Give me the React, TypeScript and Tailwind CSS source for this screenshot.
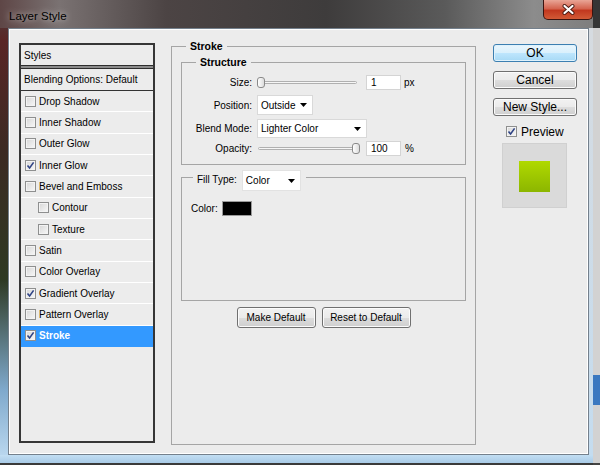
import type { ReactNode } from "react";

type StyleRow = { label: string; on?: boolean; sub?: boolean; active?: boolean };

const styleRows: StyleRow[] = [
  { label: "Drop Shadow" },
  { label: "Inner Shadow" },
  { label: "Outer Glow" },
  { label: "Inner Glow", on: true },
  { label: "Bevel and Emboss" },
  { label: "Contour", sub: true },
  { label: "Texture", sub: true },
  { label: "Satin" },
  { label: "Color Overlay" },
  { label: "Gradient Overlay", on: true },
  { label: "Pattern Overlay" },
  { label: "Stroke", on: true, active: true },
];

function Check({ on }: { on?: boolean }) {
  return (
    <span className="flex h-[11px] w-[11px] shrink-0 items-center justify-center border border-[#8e8f8f] bg-[image:linear-gradient(135deg,#d6d6d6,#f8f8f8)] shadow-[inset_0_0_0_1px_#f3f3f3]">
      {on && (
        <svg width="9" height="9" viewBox="0 0 9 9">
          <path d="M1.5 4.5 3.6 7 7.6 1.4" fill="none" stroke="#2f4385" strokeWidth="1.6" />
        </svg>
      )}
    </span>
  );
}

function Btn({ children, className, primary }: { children: ReactNode; className: string; primary?: boolean }) {
  return (
    <button
      className={`flex items-center justify-center rounded-[3px] border text-black ${
        primary
          ? "border-[#3c7fb1] bg-[image:linear-gradient(#eaf6fd,#d9f0fc_50%,#bee6fd_51%,#a7d9f5)] shadow-[inset_0_0_0_1px_#dff2fc]"
          : "border-[#707070] bg-[image:linear-gradient(#f2f2f2,#ebebeb_50%,#dddddd_51%,#cfcfcf)] shadow-[inset_0_0_0_1px_#fbfbfb]"
      } ${className}`}
    >
      {children}
    </button>
  );
}

function Slider({ end }: { end?: boolean }) {
  return (
    <div className="relative flex h-[15px] w-[100px] items-center">
      <div className="ml-[1px] h-[3px] flex-1 rounded-full border border-[#b0b0b0] bg-[#f6f6f6]" />
      <div
        className={`absolute top-[2px] h-[11px] w-[8px] rounded-[3px] border border-[#8a8a8a] bg-[image:linear-gradient(to_right,#ffffff,#dcdcdc)] ${
          end ? "right-[-3px]" : "left-0"
        }`}
      />
    </div>
  );
}

function Field({ value }: { value: string }) {
  return (
    <div className="ml-[9px] flex h-[15px] w-[35px] items-center border border-[#d4d4d4] bg-white pl-[4px] text-[10px] text-black">
      {value}
    </div>
  );
}

function Drop({ value, className }: { value: string; className: string }) {
  return (
    <div className={`flex items-center justify-between border border-[#d9d9d9] bg-white pl-[3px] pr-[5px] text-[10px] text-black ${className}`}>
      <span>{value}</span>
      <svg width="7" height="4" viewBox="0 0 7 4">
        <path d="M0 0h7L3.5 4z" fill="#000" />
      </svg>
    </div>
  );
}

function StylesPanel() {
  return (
    <div className="ml-[10px] mt-[14px] flex h-[400px] w-[136px] flex-col border-2 border-[#363636] text-[10px] text-black">
      <div className="flex h-[20px] items-center pl-[3px]">Styles</div>
      <div className="h-[4px] border-y border-[#2e2e2e] bg-[#8c8c8c]" />
      <div className="flex h-[22px] items-center border-b border-[#333] pl-[3px]">Blending Options: Default</div>
      {styleRows.map((r) => (
        <div
          key={r.label}
          className={`flex h-[21.33px] items-center gap-[3px] border-b ${r.sub ? "pl-[17px]" : "pl-[4px]"} ${
            r.active ? "border-[#3399ff] bg-[#3399ff] font-bold text-white" : "border-white"
          }`}
        >
          <Check on={r.on} />
          <span>{r.label}</span>
        </div>
      ))}
    </div>
  );
}

function StrokeGroup() {
  return (
    <fieldset className="ml-[16px] mt-[11px] h-[405px] w-[305px] border border-[#a5a5a5] text-[10px] text-black">
      <legend className="ml-[14px] px-[4px] text-[10.5px] font-bold leading-[12px]">Stroke</legend>

      <fieldset className="ml-[9px] mt-[4px] h-[109px] w-[285px] border border-[#a5a5a5]">
        <legend className="ml-[14px] px-[4px] text-[10.5px] font-bold leading-[12px]">Structure</legend>
        <div className="mt-[7px] flex flex-col">
          <div className="flex h-[15px] items-center">
            <span className="w-[70px] text-right">Size:</span>
            <div className="ml-[5px] flex items-center">
              <Slider />
              <Field value="1" />
              <span className="ml-[3px]">px</span>
            </div>
          </div>
          <div className="mt-[5px] flex h-[20px] items-center">
            <span className="w-[70px] text-right">Position:</span>
            <Drop value="Outside" className="ml-[5px] h-[20px] w-[56px]" />
          </div>
          <div className="mt-[4px] flex h-[19px] items-center">
            <span className="w-[70px] text-right">Blend Mode:</span>
            <Drop value="Lighter Color" className="ml-[5px] h-[19px] w-[110px]" />
          </div>
          <div className="mt-[3px] flex h-[15px] items-center">
            <span className="w-[70px] text-right">Opacity:</span>
            <div className="ml-[5px] flex items-center">
              <Slider end />
              <Field value="100" />
              <span className="ml-[4px]">%</span>
            </div>
          </div>
        </div>
      </fieldset>

      <fieldset className="ml-[9px] mt-[5px] h-[131px] w-[285px] border border-[#a5a5a5]">
        <legend className="ml-[11px] flex h-[14px] items-start pl-[4px] pr-[5px]">
          <span className="mt-[2px]">Fill Type:</span>
          <Drop value="Color" className="ml-[5px] h-[21px] w-[59px] shrink-0 border-[#e2e2e2]" />
        </legend>
        <div className="ml-[9px] mt-[17px] flex h-[15px] items-center">
          <span>Color:</span>
          <div className="ml-[4px] h-[15px] w-[30px] border border-[#9a9a9a] bg-black" />
        </div>
      </fieldset>

      <div className="mt-[6px] flex justify-center gap-[6px]">
        <Btn className="h-[21px] w-[79px] text-[10px]">Make Default</Btn>
        <Btn className="h-[21px] w-[89px] text-[10px]">Reset to Default</Btn>
      </div>
    </fieldset>
  );
}

function RightColumn() {
  return (
    <div className="ml-[17px] mt-[15px] flex w-[84px] flex-col text-[12px] text-black">
      <Btn primary className="h-[18px] w-[84px]">OK</Btn>
      <Btn className="mt-[9px] h-[18px] w-[84px]">Cancel</Btn>
      <Btn className="mt-[9px] h-[18px] w-[84px]">New Style...</Btn>
      <div className="ml-[13px] mt-[10px] flex h-[11px] items-center gap-[4px]">
        <Check on />
        <span>Preview</span>
      </div>
      <div className="ml-[9px] mt-[6px] h-[65px] w-[65px] border border-[#d0d0d0] bg-[#dadada] pl-[16px] pt-[17px]">
        <div className="h-[31px] w-[31px] bg-[image:linear-gradient(#b0d900,#8cb600)]" />
      </div>
    </div>
  );
}

export default function App() {
  return (
    <div className="flex h-[465px] w-[600px] overflow-hidden bg-[#3a3a3a] font-['Liberation_Sans',Arial,sans-serif]">
      <div className="flex h-[463px] w-[593px] flex-col bg-[image:linear-gradient(#4a4444_0px,#5a2626_40px,#3c2a24_150px,#2e3a24_280px,#7fa9cc_390px,#c0dcf2_463px)]">
        <div className="flex h-[28px] items-start bg-[image:linear-gradient(to_right,#5e4646,#7a7272_10%,#4c4444_28%,#3e3c3c_55%,#5a5a5a_75%,#8c8c8c_90%,#7e7e7e)]">
          <span className="pl-[9px] pt-[9px] text-[11.5px] leading-[14px] text-black [text-shadow:0_0_6px_rgba(255,255,255,0.75)]">
            Layer Style
          </span>
          <div className="ml-auto flex h-[20px] w-[50px] items-center justify-center rounded-b-[5px] border border-t-0 border-[#3b1410] bg-[image:linear-gradient(#e9a596,#d4644f_45%,#c2381f_55%,#d25a36)]">
            <svg width="13" height="11" viewBox="0 0 13 11">
              <path d="M2.5 2 10.5 9M10.5 2 2.5 9" stroke="#4a1a12" strokeWidth="4" strokeLinecap="round" />
              <path d="M2.5 2 10.5 9M10.5 2 2.5 9" stroke="#ffffff" strokeWidth="2.2" strokeLinecap="round" />
            </svg>
          </div>
        </div>
        <div className="flex h-[427px]">
          <div className="w-[8px]" />
          <div className="flex h-[427px] w-[581px] items-start border border-[#74808c] bg-[#ececec] shadow-[inset_1px_1px_0_#fff,inset_-1px_-1px_0_#fff]">
            <StylesPanel />
            <StrokeGroup />
            <RightColumn />
          </div>
          <div className="w-[4px] bg-[image:linear-gradient(#d6dbe0,#c4dcef)]" />
        </div>
        <div className="h-[8px] bg-[image:linear-gradient(#c2def3,#a9cbe7)]" />
      </div>
      <div className="flex w-[7px] flex-col">
        <div className="h-[28px] bg-[#353535]" />
        <div className="h-[347px] bg-[#d2d2d2]" />
        <div className="h-[30px] bg-[#3a78c0]" />
        <div className="h-[58px] bg-[#d2d2d2]" />
        <div className="flex-1 bg-[#444]" />
      </div>
    </div>
  );
}
